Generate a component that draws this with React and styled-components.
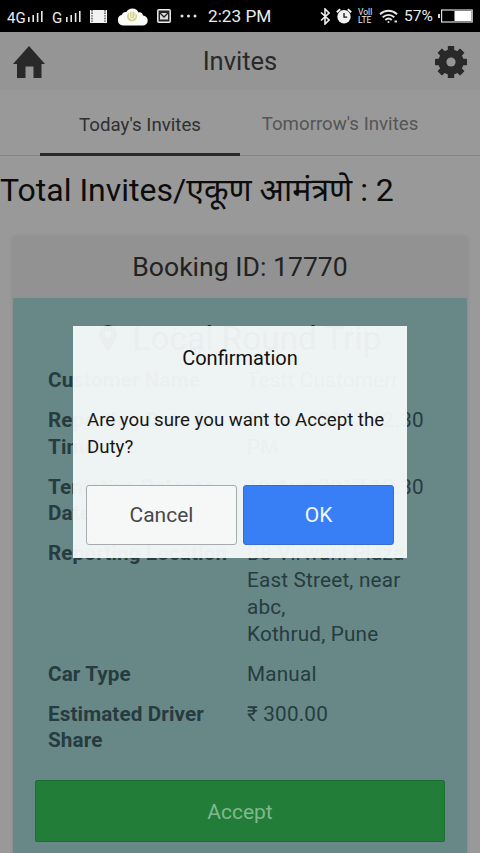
import styled, { createGlobalStyle } from 'styled-components';

const bookingRows = [
  { label: 'Customer Name', value: 'Testt Customerr' },
  { label: 'Reporting Date & Time', value: '19 Aug 2017 12.30 PM' },
  { label: 'Tentative Release Date', value: '19 Aug 2017 12.30 PM' },
  { label: 'Reporting Location', value: 'B8 Virwani Plaza East Street, near abc,\nKothrud, Pune' },
  { label: 'Car Type', value: 'Manual' },
  { label: 'Estimated Driver Share', value: '₹ 300.00' },
];

const SignalBars = () => (
  <svg width='16' height='12' viewBox='0 0 16 12' fill='#e8e8e8'>
    <rect x='0' y='7' width='1.6' height='5' />
    <rect x='4.4' y='5' width='1.6' height='7' />
    <rect x='8.8' y='3' width='1.6' height='9' />
    <rect x='13' y='1' width='1.6' height='11' />
  </svg>
);

const StatusIcons = () => (
  <>
    <Film width='17' height='13' viewBox='0 0 17 13'>
      <rect width='17' height='13' fill='#f2f2f2' />
      <path d='M2 0v13M15 0v13' stroke='#222' strokeWidth='1.2' strokeDasharray='1.4 1.2' />
    </Film>
    <Cloud width='31' height='19' viewBox='0 0 31 19'>
      <path d='M6 18.5a5.5 5.5 0 0 1-1-10.8C5.6 5.4 7.5 4.6 9.3 5A6.8 6.8 0 0 1 21.5 5.5c2.6-.6 4.2.9 4.5 3A4.9 4.9 0 0 1 25.5 18.5z' fill='#fbfbf5' />
      <circle cx='15' cy='9.5' r='5' fill='#d3cf92' />
      <path d='M12.5 5v5l2.5 2.5L18 10V5M15 4v6' stroke='#f7f6df' strokeWidth='1.2' fill='none' />
    </Cloud>
    <Mail width='14' height='14' viewBox='0 0 14 14'>
      <rect x='.8' y='.8' width='12.4' height='12.4' rx='1' fill='#222' stroke='#eee' strokeWidth='1.5' />
      <path d='M3 4h8v6.5H3z' fill='#ddd' />
      <path d='M3 4l4 4 4-4' stroke='#222' strokeWidth='1.3' fill='none' />
    </Mail>
    <svg width='17' height='4' viewBox='0 0 17 4' fill='#e6e6e6'>
      <circle cx='2' cy='2' r='1.5' />
      <circle cx='8.5' cy='2' r='1.5' />
      <circle cx='15' cy='2' r='1.5' />
    </svg>
  </>
);

const Bluetooth = () => (
  <svg width='10' height='17' viewBox='0 0 10 17' fill='none' stroke='#eee' strokeWidth='1.6'>
    <path d='M1 4.5l8 7.5-4 4V1l4 4-8 7.5' />
  </svg>
);

const Alarm = () => (
  <svg width='16' height='16' viewBox='0 0 16 16'>
    <circle cx='8' cy='8.7' r='6.7' fill='#f2f2f2' />
    <path d='M.8 4.2l3.4-2.9M15.2 4.2l-3.4-2.9' stroke='#f2f2f2' strokeWidth='2' />
    <path d='M8 5v4.2h3.2' stroke='#111' strokeWidth='1.3' fill='none' />
  </svg>
);

const Wifi = () => (
  <svg width='19' height='15' viewBox='0 0 19 15' fill='none' stroke='#e8e8e8' strokeWidth='1.9'>
    <path d='M1 5.2c5-4.6 12-4.6 17 0M3.7 8.3c3.5-3.2 8.1-3.2 11.6 0M6.3 11c2-1.8 4.4-1.8 6.4 0' />
    <circle cx='9.5' cy='13' r='1' fill='#e8e8e8' stroke='none' />
    <path d='M15.5 12.5h2.5' />
  </svg>
);

const Battery = () => (
  <svg width='35' height='14' viewBox='0 0 35 14'>
    <path d='M0 5h2v4H0z' fill='#ddd' />
    <rect x='3.6' y='1' width='30.6' height='12' fill='#000' stroke='#ddd' strokeWidth='1.2' />
    <rect x='16.5' y='2' width='17' height='10' fill='#fff' />
  </svg>
);

const HomeIcon = () => (
  <svg width='32' height='32' viewBox='0 0 32 32' fill='#292929'>
    <path d='M16 0L32 18H28.5V32H20.5V20.5H12.5V32H4V18H0z' />
  </svg>
);

const GearIcon = () => (
  <svg width='32' height='32' viewBox='-16 -16 32 32' fill='#292929'>
    {[0, 45, 90, 135].map((deg) => (
      <rect key={deg} x='-3.2' y='-16' width='6.4' height='32' rx='.6' transform={`rotate(${deg})`} />
    ))}
    <circle r='12.6' />
    <circle r='4.6' fill='#959595' />
  </svg>
);

const PinIcon = () => (
  <svg width='18' height='27' viewBox='0 0 18 27' fill='#20292a'>
    <path fillRule='evenodd' d='M9 0a9 9 0 0 1 9 9c0 6-9 18-9 18S0 15 0 9a9 9 0 0 1 9-9zm0 5.8a3.2 3.2 0 1 0 0 6.4 3.2 3.2 0 0 0 0-6.4z' />
  </svg>
);

const App = () => {
  return (
    <>
      <GlobalStyle />
      <Screen>
        <StatusBar>
          <Network>4G</Network>
          <SignalBars />
          <Network $second>G</Network>
          <SignalBars />
          <StatusIcons />
          <Clock>2:23 PM</Clock>
          <StatusRight>
            <Bluetooth />
            <Alarm />
            <Volte>
              <span>Voll</span>
              <span>LTE</span>
            </Volte>
            <Wifi />
            <Percent>57%</Percent>
            <Battery />
          </StatusRight>
        </StatusBar>
        <Header>
          <HomeIcon />
          <Title>Invites</Title>
          <GearIcon />
        </Header>
        <Tabs>
          <Tab $active>Today's Invites</Tab>
          <Tab>Tomorrow's Invites</Tab>
        </Tabs>
        <Total>Total Invites/एकूण आमंत्रणे : 2</Total>
        <Card>
          <CardHeader>Booking ID: 17770</CardHeader>
          <CardBody>
            <TripType>
              <PinIcon />
              Local Round Trip
            </TripType>
            <Rows>
              {bookingRows.map((row) => (
                <Row key={row.label}>
                  <Label>{row.label}</Label>
                  <Value>{row.value}</Value>
                </Row>
              ))}
            </Rows>
            <AcceptButton>Accept</AcceptButton>
          </CardBody>
        </Card>
        <Overlay>
          <Dialog>
            <DialogTitle>Confirmation</DialogTitle>
            <DialogText>Are you sure you want to Accept the Duty?</DialogText>
            <DialogButtons>
              <DialogButton>Cancel</DialogButton>
              <DialogButton $primary>OK</DialogButton>
            </DialogButtons>
          </Dialog>
        </Overlay>
      </Screen>
    </>
  );
};

const GlobalStyle = createGlobalStyle`
  * {
    box-sizing: border-box;
  }
  body {
    margin: 0;
    overflow: hidden;
    background-color: #999999;
    font-family: Roboto, 'Noto Sans', sans-serif;
  }
  button {
    font-family: inherit;
    padding: 0;
  }
  svg {
    flex-shrink: 0;
  }
`;

const Screen = styled.div`
  position: relative;
  width: 480px;
  height: 853px;
  overflow: hidden;
`;

const StatusBar = styled.div`
  display: flex;
  align-items: center;
  height: 32px;
  padding: 0 7px 0 7px;
  background-color: #000000;
  color: #ececec;
`;

const Network = styled.span`
  width: ${(props) => (props.$second ? '13px' : '20px')};
  margin: 3px 1px 0 ${(props) => (props.$second ? '8px' : '0')};
  font-size: 15px;
`;

const Film = styled.svg`
  margin-left: 8px;
`;

const Cloud = styled.svg`
  margin-left: 10px;
`;

const Mail = styled.svg`
  margin: 0 9px;
`;

const Clock = styled.span`
  margin-left: 11px;
  font-size: 17.2px;
  white-space: nowrap;
`;

const StatusRight = styled.div`
  display: flex;
  align-items: center;
  gap: 6px;
  margin-left: auto;
`;

const Volte = styled.div`
  display: flex;
  flex-direction: column;
  width: 15px;
  font-size: 8.5px;
  line-height: 8px;
`;

const Percent = styled.span`
  width: 29px;
  margin-right: -1px;
  font-size: 15.5px;
`;

const Header = styled.div`
  display: flex;
  align-items: center;
  justify-content: space-between;
  height: 58px;
  padding: 1px 13px 0;
  background-color: #959595;
`;

const Title = styled.div`
  margin-top: -2px;
  color: #292929;
  font-size: 25.5px;
`;

const Tabs = styled.div`
  display: flex;
  justify-content: center;
  height: 66px;
  border-bottom: 1px solid #858585;
`;

const Tab = styled.div`
  width: 200px;
  height: 66px;
  border-bottom: ${(props) => (props.$active ? '3px solid #292929' : '0')};
  color: ${(props) => (props.$active ? '#303030' : '#555555')};
  font-size: 18.7px;
  line-height: ${(props) => (props.$active ? '70px' : '68px')};
  text-align: center;
`;

const Total = styled.div`
  height: 80px;
  color: #0c0c0c;
  font-size: 32px;
  line-height: 69px;
  white-space: nowrap;
`;

const Card = styled.div`
  width: 454px;
  margin: 0 13px;
  border-radius: 3px;
  box-shadow: 0 1px 4px rgba(0, 0, 0, 0.13);
`;

const CardHeader = styled.div`
  height: 62px;
  background-color: #929292;
  color: #222222;
  font-size: 26.6px;
  line-height: 61px;
  text-align: center;
`;

const CardBody = styled.div`
  height: 600px;
  padding: 20px 22px 0;
  background-color: #688787;
`;

const TripType = styled.div`
  display: flex;
  align-items: center;
  justify-content: center;
  gap: 16px;
  height: 40px;
  color: #20292a;
  font-size: 33.4px;
`;

const Rows = styled.div`
  display: flex;
  flex-direction: column;
  gap: 13.3px;
  margin: 9px 13px 0;
  color: #263c40;
  font-size: 20.7px;
  letter-spacing: 0.2px;
  line-height: 26.7px;
`;

const Row = styled.div`
  display: flex;
`;

const Label = styled.div`
  width: 199px;
  padding-right: 12px;
  font-weight: 700;
  letter-spacing: 0.1px;
`;

const Value = styled.div`
  width: 181px;
  white-space: pre-line;
`;

const AcceptButton = styled.button`
  display: block;
  width: 410px;
  height: 62px;
  margin-top: 26px;
  border: 1px solid #1d6e32;
  border-radius: 2px;
  background-color: #227d38;
  color: #81b88d;
  font-size: 21px;
  line-height: 62px;
`;

const Overlay = styled.div`
  position: absolute;
  top: 31px;
  right: 0;
  bottom: 0;
  left: 0;
  display: flex;
  align-items: center;
  justify-content: center;
`;

const Dialog = styled.div`
  width: 334px;
  height: 232px;
  padding: 17px 13px 0;
  background-color: rgba(246, 249, 249, 0.95);
`;

const DialogTitle = styled.div`
  color: #111111;
  font-size: 20px;
  line-height: 31px;
  text-align: center;
`;

const DialogText = styled.div`
  margin: 33px 0 0 1px;
  color: #161616;
  font-size: 18.65px;
  line-height: 26.6px;
`;

const DialogButtons = styled.div`
  display: flex;
  gap: 6px;
  margin-top: 25px;
`;

const DialogButton = styled.button`
  width: 151px;
  height: 60px;
  border: 1px solid ${(props) => (props.$primary ? '#376dcc' : '#a8abab')};
  border-radius: 3px;
  background-color: ${(props) => (props.$primary ? '#387ef5' : '#f6f8f8')};
  color: ${(props) => (props.$primary ? '#f2f7ff' : '#484848')};
  font-size: 21px;
`;

export default App;
